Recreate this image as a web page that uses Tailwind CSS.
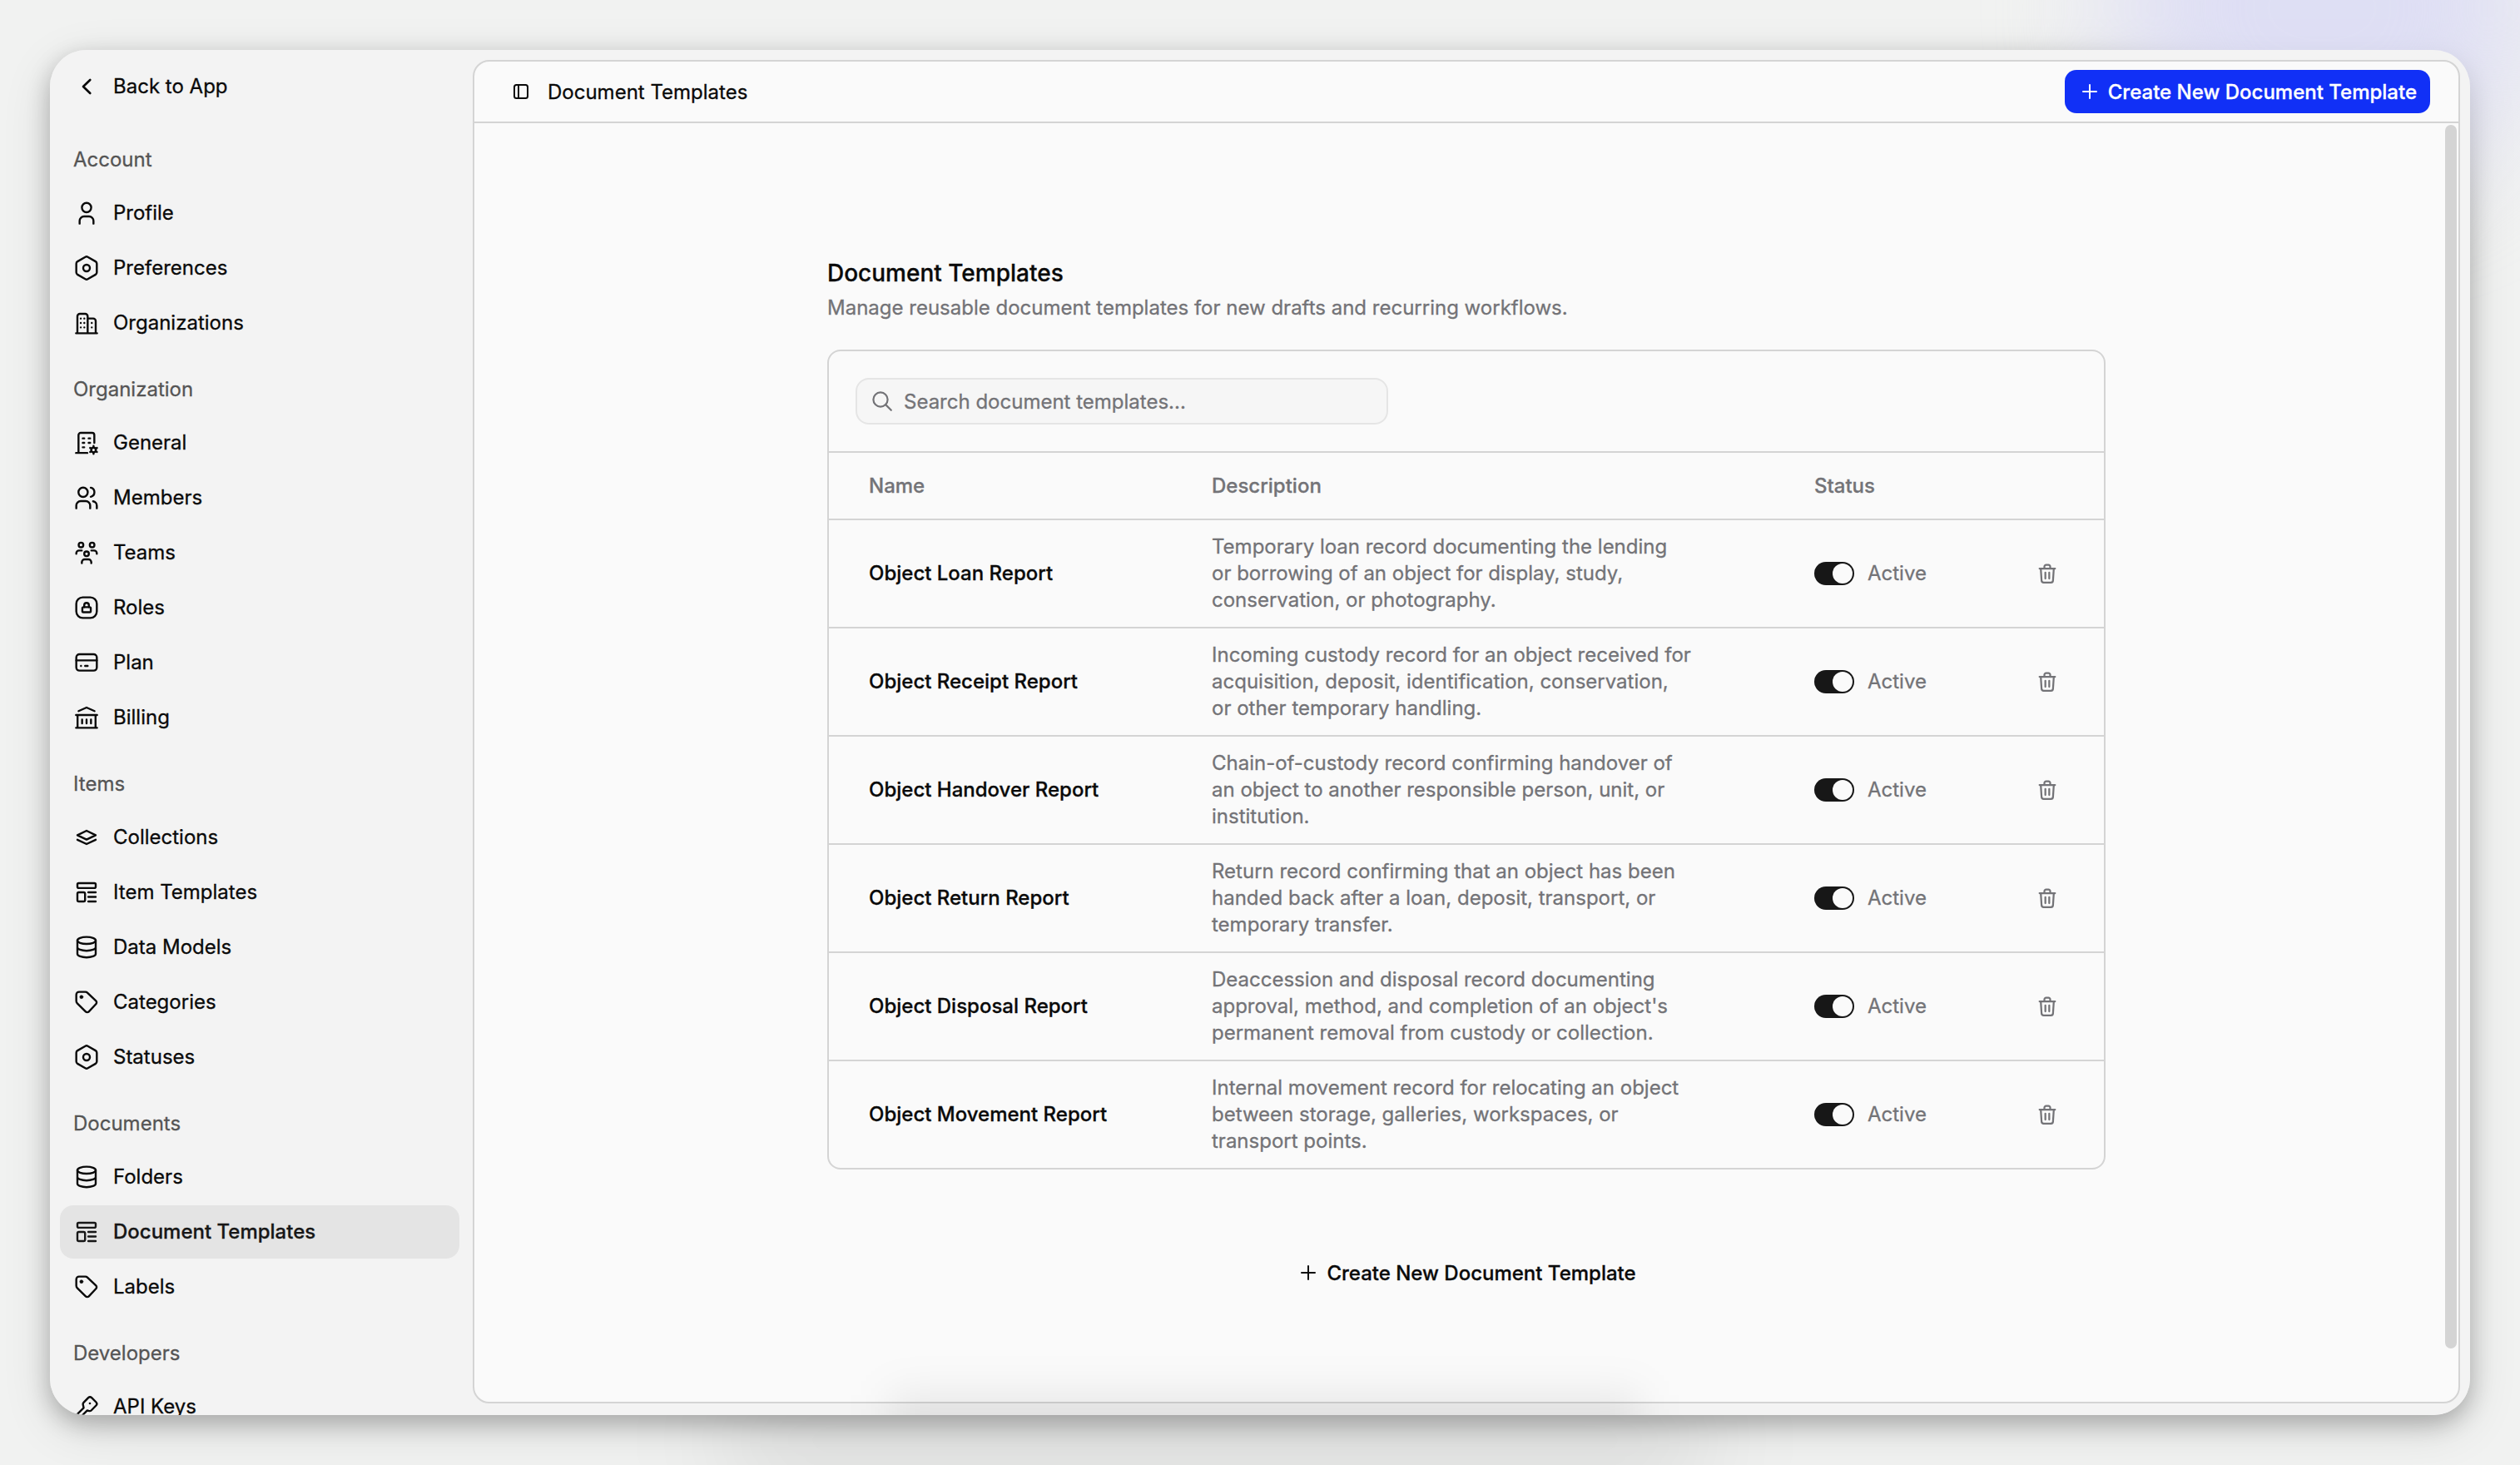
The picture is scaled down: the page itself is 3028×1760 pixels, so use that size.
<!DOCTYPE html>
<html lang="en">
<head>
<meta charset="utf-8">
<title>Document Templates</title>
<script src="https://cdn.jsdelivr.net/npm/@tailwindcss/browser@4"></script>
</head>
<body class="relative h-[1760px] w-[3028px] overflow-hidden bg-[#f1f2f1] font-[Inter,sans-serif] text-2xl leading-8 text-[#0a0a0a] [-webkit-text-stroke:0.3px]">

<!-- Icon sprite -->
<svg class="hidden" xmlns="http://www.w3.org/2000/svg">
  <symbol id="chevron" viewBox="0 0 24 24"><path d="M15.2 6 9 12l6.2 6" stroke-width="2"/></symbol>
  <symbol id="user" viewBox="0 0 24 24"><circle cx="12" cy="7" r="4.2"/><path d="M5.75 21.5V19a4 4 0 0 1 4-4h4.5a4 4 0 0 1 4 4v2.5"/></symbol>
  <symbol id="hexagon" viewBox="0 0 24 24"><path d="M10.9 2a2.2 2.2 0 0 1 2.2 0l7.05 4.1a2.2 2.2 0 0 1 1.1 1.9v8a2.2 2.2 0 0 1-1.1 1.9L13.1 22a2.2 2.2 0 0 1-2.2 0l-7.05-4.1A2.2 2.2 0 0 1 2.75 16V8a2.2 2.2 0 0 1 1.1-1.900z"/><circle cx="12" cy="12" r="3"/></symbol>
  <symbol id="buildings" viewBox="0 0 24 24"><path d="M2.5 21.25h19M3.75 21V6A2.25 2.25 0 0 1 6 3.75h4.75A2.25 2.25 0 0 1 13 6v15M13 8h5a2.25 2.25 0 0 1 2.25 2.25V21"/><path d="M6.8 8h.01M10 8h.01M6.8 12h.01M10 12h.01M6.8 16h.01M10 16h.01M16.7 12h.01M16.7 16h.01" stroke-width="1.8"/></symbol>
  <symbol id="building-gear" viewBox="0 0 24 24"><path d="M2.5 21.1h10.2M4.75 21V5A2 2 0 0 1 6.75 3H17a2 2 0 0 1 2 2v7M8.6 8h1.3M13.9 8h1.3M8.6 12h1.3M13.9 12h1.3M8.6 16h1.3"/><circle cx="18.3" cy="18.4" r="2.1"/><path d="M18.3 14.8v1.4M18.3 20.6V22M15.2 16.6l1.2.7M20.2 19.5l1.2.7M15.2 20.2l1.2-.7M20.2 17.3l1.2-.7"/></symbol>
  <symbol id="members" viewBox="0 0 24 24"><circle cx="8.9" cy="7" r="4.2"/><path d="M2.75 21.5V19a4 4 0 0 1 4-4h4.5a4 4 0 0 1 4 4v2.500M15.8 2.900a4.200 4.200 0 0 1 0 8.200M17.9 15.200a4 4 0 0 1 3.350 4v2.300"/></symbol>
  <symbol id="teams" viewBox="0 0 24 24"><circle cx="7" cy="5" r="2.100"/><circle cx="17" cy="5" r="2.100"/><circle cx="12" cy="13" r="2.100"/><path d="M2.750 13v-.5A2.500 2.500 0 0 1 5.250 10H7.700M21.250 13v-.5a2.500 2.500 0 0 0-2.500-2.500H16.300M7.750 21.400v-.9A2.500 2.500 0 0 1 10.250 18h3.500a2.500 2.500 0 0 1 2.500 2.500v.9"/></symbol>
  <symbol id="lock-box" viewBox="0 0 24 24"><rect x="2.750" y="2.750" width="18.500" height="18.500" rx="5.800"/><rect x="8.200" y="11.500" width="7.600" height="4.600" rx="1"/><path d="M9.900 11.500V9.800a2.100 2.100 0 0 1 4.200 0v1.700"/></symbol>
  <symbol id="card" viewBox="0 0 24 24"><rect x="2.750" y="4.500" width="18.500" height="14.750" rx="2.900"/><path d="M2.750 10h18.500M7 15h.01M10.700 15h2.300"/></symbol>
  <symbol id="bank" viewBox="0 0 24 24"><path d="M4.800 6.200 12 3l7.200 3.200M2.500 9.750h19M3.900 9.750V21M20.100 9.750V21M2.500 21.250h19M8 13.900v3.400M12 13.900v3.400M16 13.900v3.400"/></symbol>
  <symbol id="layers" viewBox="0 0 24 24"><path d="M12 6l8.250 4L12 14l-8.250-4zM3.750 14.100 12 18l8.250-3.900"/></symbol>
  <symbol id="template" viewBox="0 0 24 24"><rect x="3.750" y="3.750" width="16.500" height="4.400" rx="1.200"/><rect x="3.750" y="12" width="6.900" height="8.250" rx="1.300"/><path d="M13.600 12h6.650M13.600 16.100h6.650M13.600 20.250h6.650"/></symbol>
  <symbol id="database" viewBox="0 0 24 24"><ellipse cx="12" cy="5.900" rx="8.250" ry="3.150"/><path d="M3.750 5.900V18c0 1.750 3.700 3.150 8.250 3.150s8.250-1.400 8.250-3.150V5.900M3.750 12c0 1.750 3.700 3.150 8.250 3.150s8.250-1.400 8.250-3.150"/></symbol>
  <symbol id="tag" viewBox="0 0 24 24"><path d="M2.750 5.250a2.500 2.500 0 0 1 2.500-2.500h5.600a3 3 0 0 1 2.100.85l7.500 7.200a2 2 0 0 1 0 2.900l-6.400 6.800a2 2 0 0 1-2.850 0L3.600 13a3 3 0 0 1-.85-2.100z"/><circle cx="7.400" cy="7.300" r="1.500" fill="currentColor" stroke-width=".4"/></symbol>
  <symbol id="key" viewBox="0 0 24 24"><path d="M2.600 19.700 9.400 13 8.800 10.200a2.200 2.200 0 0 1 .6-2L13.600 3.800a2.200 2.200 0 0 1 3 0l4 4.100a2.200 2.200 0 0 1 0 3l-4.200 4.300a2.200 2.200 0 0 1-2 .6l-1.900-.4-6.300 6.400"/><circle cx="15" cy="9" r="1" fill="currentColor" stroke="none"/></symbol>
  <symbol id="panel" viewBox="0 0 28 28"><rect x="6" y="6" width="16" height="16" rx="2.500"/><path d="M11 6v16"/></symbol>
  <symbol id="plus" viewBox="0 0 28 28"><path d="M14 6v16M6 14h16"/></symbol>
  <symbol id="search" viewBox="0 0 28 28"><circle cx="12" cy="12" r="8.600"/><path d="m18.400 18.400 6.400 6.400"/></symbol>
  <symbol id="trash" viewBox="0 0 24 24"><path d="M4 6.900h16M9 6.700V4.900A1.800 1.800 0 0 1 10.800 3.100h2.400A1.800 1.800 0 0 1 15 4.900v1.800M5.300 7l.8 12.200a2.200 2.200 0 0 0 2.200 2.100h7.400a2.200 2.200 0 0 0 2.200-2.100L18.700 7M10 11v6.200M14 11v6.200"/></symbol>
</svg>

<!-- Tinted glow behind the window -->
<div class="absolute -top-[200px] left-[2540px] h-[420px] w-[500px] rounded-full bg-[#d9daf5]/80 blur-[70px]"></div>
<div class="absolute top-[1660px] left-[860px] h-[140px] w-[1200px] rounded-full bg-black/7 blur-[60px]"></div>

<div class="absolute top-[60px] left-[60px] flex h-[1640px] w-[2908px] overflow-hidden rounded-[44px] bg-[#f3f3f3]" id="window">
  <aside class="flex w-[508px] flex-none flex-col gap-6 pt-3 pr-4 pl-3">
    <a class="flex h-16 flex-none items-center gap-4 px-4"><svg class="size-8 flex-none fill-none stroke-current stroke-[1.8]" stroke-linecap="round" stroke-linejoin="round"><use href="#chevron"/></svg>Back to App</a>
    <nav class="flex flex-col gap-4" id="nav"></nav>
  </aside>

  <main class="relative mt-3 mr-3 mb-3.5 flex flex-1 flex-col overflow-hidden rounded-[20px] border-2 border-[#d4d4d4] bg-[#fafafa]">
    <header class="flex h-[74px] flex-none items-center border-b-2 border-[#d4d4d4] pr-[34px] pl-[42px]">
      <svg class="size-7 flex-none fill-none stroke-current stroke-2" stroke-linejoin="round"><use href="#panel"/></svg>
      <span class="ml-[18px] flex-1 pt-0.5">Document Templates</span>
      <button class="flex h-[52px] items-center gap-2 rounded-[14px] bg-[#1130f6] px-4 font-medium text-white"><svg class="size-7 fill-none stroke-current stroke-2" stroke-linecap="round"><use href="#plus"/></svg><span class="pt-0.5">Create New Document Template</span></button>
    </header>

    <div class="flex w-[1536px] flex-1 flex-col self-center pt-40">
      <h1 class="text-[28px] leading-10 font-medium">Document Templates</h1>
      <p class="mt-1.5 text-[#737377]">Manage reusable document templates for new drafts and recurring workflows.</p>
      <section class="mt-[34px] overflow-hidden rounded-[16px] border-2 border-[#d4d4d4]">
        <div class="flex h-[122px] items-center border-b-2 border-[#d4d4d4] px-8">
          <label class="flex h-14 w-[640px] items-center gap-3 rounded-[16px] border-2 border-[#e5e5e5] bg-[#f6f6f6] px-4 text-[#737377]"><svg class="size-7 fill-none stroke-current stroke-[2.2]" stroke-linecap="round"><use href="#search"/></svg><span class="pt-0.5">Search document templates...</span></label>
        </div>
        <div class="grid h-[81px] grid-cols-[412px_724px_1fr_120px] items-center border-b-2 border-[#d4d4d4] pl-12 font-medium text-[#737377]">
          <span>Name</span><span>Description</span><span>Status</span>
        </div>
        <div class="divide-y-2 divide-[#d4d4d4]" id="rows"></div>
      </section>
      <button class="mt-[98px] flex h-[52px] items-center gap-2 self-center px-4 font-medium"><svg class="size-7 fill-none stroke-current stroke-2" stroke-linecap="round"><use href="#plus"/></svg><span class="pt-0.5">Create New Document Template</span></button>
    </div>

    <!-- Scrollbar thumb -->
    <div class="absolute top-[76px] right-0.5 h-[1470px] w-3.5 rounded-full bg-[#d4d4d4]"></div>
  </main>

  <!-- Soft shade rising from the bottom edge -->
  <div class="absolute top-[1616px] left-[1010px] h-[80px] w-[900px] bg-black/8 blur-[26px]"></div>
</div>
<!-- Window shadow -->
<div class="absolute top-[60px] left-[60px] -z-10 h-[1640px] w-[2908px] rounded-[44px] shadow-[0_10px_28px_rgb(0_0_0/0.24),0_16px_60px_rgb(0_0_0/0.12)]"></div>

<script>
const groups = [
  ["Account", [["user","Profile"],["hexagon","Preferences"],["buildings","Organizations"]]],
  ["Organization", [["building-gear","General"],["members","Members"],["teams","Teams"],["lock-box","Roles"],["card","Plan"],["bank","Billing"]]],
  ["Items", [["layers","Collections"],["template","Item Templates"],["database","Data Models"],["tag","Categories"],["hexagon","Statuses"]]],
  ["Documents", [["database","Folders"],["template","Document Templates",true],["tag","Labels"]]],
  ["Developers", [["key","API Keys"]]],
];
document.getElementById("nav").innerHTML = groups.map(([title, items]) => `
  <div>
    <div class="flex h-16 items-center px-4 text-[#555555]">${title}</div>
    <div class="flex flex-col gap-0.5">${items.map(([icon, label, active]) => `
      <a class="flex h-16 items-center gap-4 rounded-[16px] px-4 ${active ? "bg-[#e4e4e4] font-medium text-[#171717]" : ""}"><svg class="size-8 flex-none fill-none stroke-current stroke-[1.8]" stroke-linecap="round" stroke-linejoin="round"><use href="#${icon}"/></svg>${label}</a>`).join("")}
    </div>
  </div>`).join("");

const rows = [
  ["Object Loan Report", "Temporary loan record documenting the lending<br>or borrowing of an object for display, study,<br>conservation, or photography."],
  ["Object Receipt Report", "Incoming custody record for an object received for<br>acquisition, deposit, identification, conservation,<br>or other temporary handling."],
  ["Object Handover Report", "Chain-of-custody record confirming handover of<br>an object to another responsible person, unit, or<br>institution."],
  ["Object Return Report", "Return record confirming that an object has been<br>handed back after a loan, deposit, transport, or<br>temporary transfer."],
  ["Object Disposal Report", "Deaccession and disposal record documenting<br>approval, method, and completion of an object's<br>permanent removal from custody or collection."],
  ["Object Movement Report", "Internal movement record for relocating an object<br>between storage, galleries, workspaces, or<br>transport points."],
];
document.getElementById("rows").innerHTML = rows.map(([name, text]) => `
  <div class="grid grid-cols-[412px_724px_1fr_82px] items-center py-4 pl-12 text-[#737377]">
    <span class="font-medium text-[#0a0a0a]">${name}</span>
    <span class="whitespace-nowrap">${text}</span>
    <span class="flex items-center gap-4"><span class="flex h-7 w-12 items-center justify-end rounded-full bg-[#171717] p-0.5"><span class="size-6 rounded-full bg-[#fafafa]"></span></span>Active</span>
    <svg class="size-7 fill-none stroke-current stroke-[1.9]" stroke-linecap="round" stroke-linejoin="round"><use href="#trash"/></svg>
  </div>`).join("");
</script>
</body>
</html>
